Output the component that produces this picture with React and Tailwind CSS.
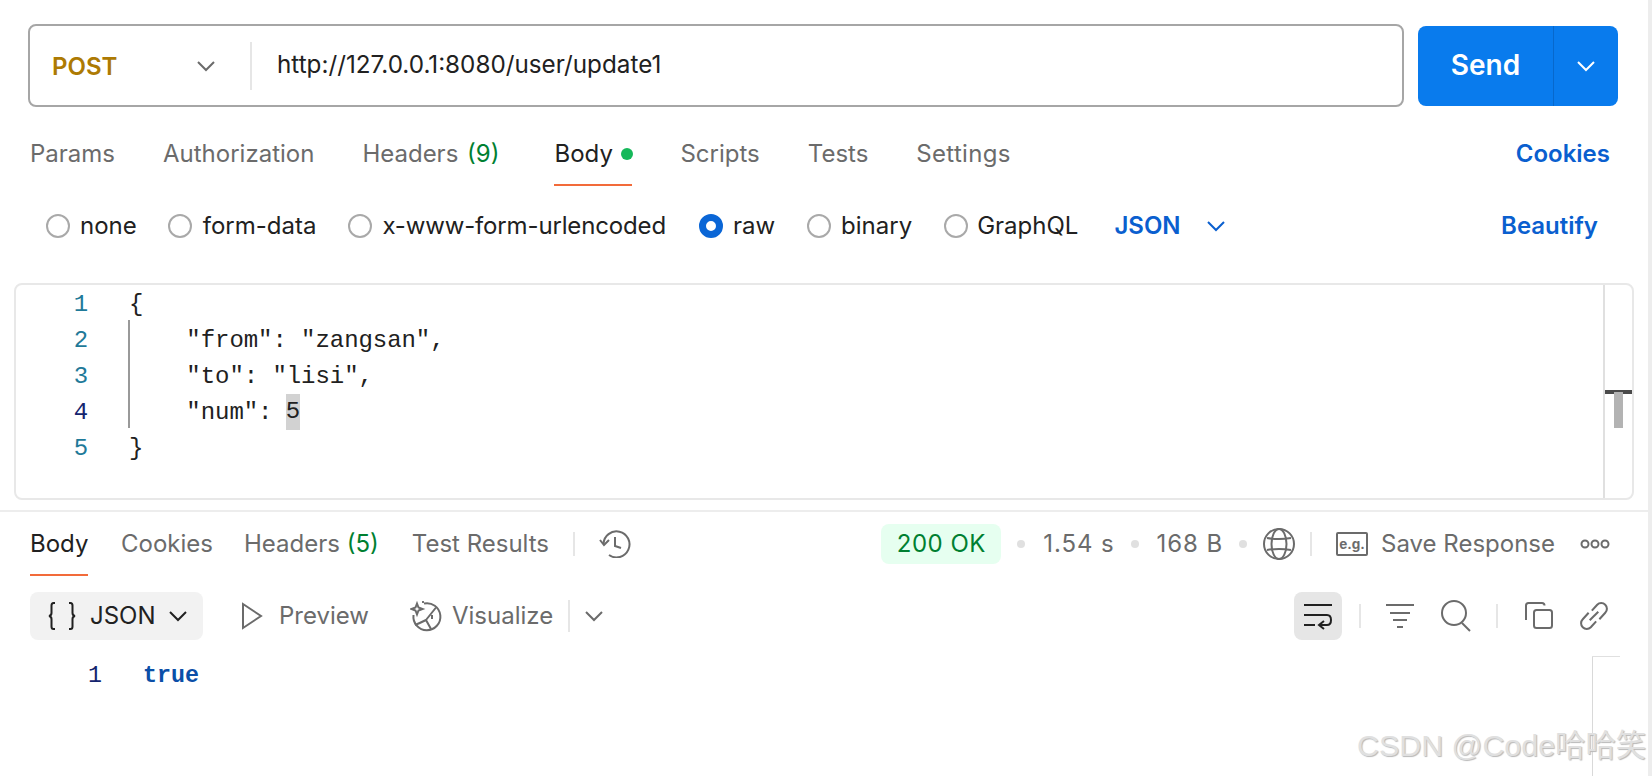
import React from "react";

const Chevron = ({ className = "", w = 20, h = 12, color = "#6b6b6b", sw = 2 }) => (
  <svg width={w} height={h} viewBox="0 0 20 12" className={className} fill="none">
    <path d="M2 2 L10 10 L18 2" stroke={color} strokeWidth={sw} />
  </svg>
);

const Radio = ({ on }) =>
  on ? (
    <span className="w-6 h-6 rounded-full border-[7px] border-[#0a66d6] bg-white shrink-0" />
  ) : (
    <span className="w-6 h-6 rounded-full border-2 border-[#a9a9a9] bg-white shrink-0" />
  );

const Sep = ({ className = "", h = "h-6" }) => <span className={`w-[2px] bg-[#e6e6e6] shrink-0 ${h} ${className}`} />;
const Dot = ({ className = "" }) => <span className={`w-2 h-2 rounded-full bg-[#e0e0e0] shrink-0 ${className}`} />;

const code = [
  ["1", "#1f7a99", "{"],
  ["2", "#1f7a99", '    "from": "zangsan",'],
  ["3", "#1f7a99", '    "to": "lisi",'],
  ["4", "#14246e", '    "num": '],
  ["5", "#1f7a99", "}"],
];

export default function App() {
  return (
    <div className="relative w-[1652px] h-[776px] overflow-hidden bg-white [font-family:Inter,sans-serif] text-[24px] text-[#6b6b6b]">
      {/* request bar */}
      <div className="flex items-center pt-6 pl-7">
        <div className="flex items-center w-[1376px] h-[83px] border-2 border-[#a6a6a6] rounded-lg">
          <span className="ml-[22px] mt-[2px] w-[144px] font-semibold text-[#ad7a03]">POST</span>
          <Chevron />
          <Sep className="ml-[34px]" h="h-12" />
          <span className="ml-[25px] text-[24.25px] text-[#212121]">http://127.0.0.1:8080/user/update1</span>
        </div>
        <div className="ml-[14px] flex items-center w-[200px] h-[80px] rounded-lg bg-[#097bed] text-white">
          <span className="w-[135px] mb-[2px] text-center font-semibold text-[28px]">Send</span>
          <span className="w-[1px] h-full bg-[#0768cc]" />
          <span className="flex-1 flex justify-center">
            <Chevron color="#ffffff" />
          </span>
        </div>
      </div>

      {/* request tabs */}
      <div className="flex items-start h-[79px] pl-[30px] pr-[42px]">
        <span className="mt-[29px]">Params</span>
        <span className="mt-[29px] ml-[48px]">Authorization</span>
        <span className="mt-[29px] ml-[48px]">
          Headers <span className="ml-[2px] text-[#007f31]">(9)</span>
        </span>
        <div className="ml-[55px] h-[79px] flex flex-col w-[78px]">
          <div className="mt-[29px] flex items-center text-[#212121]">
            Body<span className="ml-[8px] w-3 h-3 rounded-full bg-[#15b85a] shrink-0" />
          </div>
          <span className="mt-auto h-[2px] bg-[#f26b3a]" />
        </div>
        <span className="mt-[29px] ml-[48px]">Scripts</span>
        <span className="mt-[29px] ml-[48px]">Tests</span>
        <span className="mt-[29px] ml-[48px] tracking-[0.3px]">Settings</span>
        <span className="mt-[29px] ml-auto font-semibold text-[#0a5fcf]">Cookies</span>
      </div>

      {/* body types */}
      <div className="flex items-center h-[80px] pl-[46px] pr-[54px] text-[#212121]">
        <Radio /><span className="ml-[10px]">none</span>
        <span className="ml-[31px]" /><Radio /><span className="ml-[11px]">form-data</span>
        <span className="ml-[32px]" /><Radio /><span className="ml-[10px] tracking-[-0.15px]">x-www-form-urlencoded</span>
        <span className="ml-[33px]" /><Radio on /><span className="ml-[10px]">raw</span>
        <span className="ml-[32px]" /><Radio /><span className="ml-[10px]">binary</span>
        <span className="ml-[32px]" /><Radio /><span className="ml-[9px]">GraphQL</span>
        <span className="ml-[36px] font-semibold text-[#0a5fcf]">JSON</span>
        <Chevron className="ml-[25px]" color="#0a5fcf" />
        <span className="ml-auto font-semibold text-[#0a5fcf]">Beautify</span>
      </div>

      {/* editor */}
      <div className="ml-[14px] mt-[17px] w-[1620px] h-[217px] flex border-2 border-[#e8e8e8] rounded-lg">
        <div className="relative flex-1 pt-[1.5px] [font-family:'Liberation_Mono',monospace] text-[24px] tracking-[-0.06px] leading-[36px]">
          <span className="absolute left-[112px] top-[35px] w-[2px] h-[108px] bg-[#999999]" />
          {code.map(([n, c, t]) => (
            <div key={n} className="flex h-[36px] whitespace-pre text-[#212121]">
              <span className="w-[72px] text-right shrink-0" style={{ color: c }}>{n}</span>
              <span className="ml-[41px]">
                {t}
                {n === "4" && <span className="relative -top-[1px] -ml-[1px] inline-block h-[36px] bg-[#d2d2d2]">5</span>}
              </span>
            </div>
          ))}
        </div>
        <div className="relative w-[29px] border-l-2 border-[#e0e0e0]">
          <span className="absolute left-0 right-0 top-[105px] h-1 bg-[#4a4a4a]" />
          <span className="absolute left-[9px] w-[9px] top-[107px] h-9 bg-[#b3b3b3]" />
        </div>
      </div>

      <div className="mt-[10px] h-[2px] w-[1648px] bg-[#ededed]" />

      {/* response tabs */}
      <div className="flex items-start h-[64px] pl-[30px] pr-[42px]">
        <div className="h-[64px] w-[58px] flex flex-col text-[#212121]">
          <span className="mt-[14px]">Body</span>
          <span className="mt-auto h-[2px] bg-[#f26b3a]" />
        </div>
        <span className="mt-[14px] ml-[33px]">Cookies</span>
        <span className="mt-[14px] ml-[31px]">
          Headers <span className="text-[#007f31]">(5)</span>
        </span>
        <span className="mt-[14px] ml-[33px]">Test Results</span>
        <Sep className="mt-[20px] ml-[24px]" />
        <svg className="mt-[18px] ml-[24px]" width="32" height="28" viewBox="0 0 32 28" fill="none" stroke="#6b6b6b" strokeWidth="2">
          <path d="M4.5 14 A13 13 0 1 1 10 25" />
          <path d="M1 10 L5 15 L10 10" />
          <path d="M16 7 V16 L22 18" />
        </svg>
        <div className="ml-auto flex items-center h-[38px] mt-[13px]">
          <span className="flex items-center justify-center w-[120px] h-[40px] rounded-lg bg-[#e6fff0] text-[#007f31] tracking-[0.5px]">200 OK</span>
          <Dot className="ml-4" />
          <span className="ml-[18px] tracking-[0.9px]">1.54 s</span>
          <Dot className="ml-4" />
          <span className="ml-[18px] tracking-[0.9px]">168 B</span>
          <Dot className="ml-4" />
          <svg className="ml-[16px]" width="32" height="32" viewBox="0 0 32 32" fill="none" stroke="#6b6b6b" strokeWidth="2">
            <circle cx="16" cy="16" r="15" />
            <ellipse cx="16" cy="16" rx="7.5" ry="15" />
            <path d="M4 10 Q16 12 28 10 M4 22 Q16 20 28 22" />
          </svg>
          <Sep className="ml-[15px]" />
          <svg className="ml-[24px]" width="32" height="24" viewBox="0 0 32 24" fill="none">
            <rect x="1" y="1" width="30" height="22" stroke="#6b6b6b" strokeWidth="2" rx="1" />
            <text x="16" y="16.5" textAnchor="middle" fontSize="13.5" fontFamily="Inter" fill="#6b6b6b" fontWeight="700">e.g.</text>
          </svg>
          <span className="ml-[13px]">Save Response</span>
          <svg className="ml-[25px]" width="30" height="12" viewBox="0 0 30 12" fill="none" stroke="#6b6b6b" strokeWidth="2">
            <circle cx="5" cy="6" r="3.5" />
            <circle cx="15" cy="6" r="3.5" />
            <circle cx="25" cy="6" r="3.5" />
          </svg>
        </div>
      </div>

      {/* response toolbar */}
      <div className="flex items-center h-[48px] mt-[16px] pl-[30px] pr-[43px]">
        <div className="flex items-center w-[173px] h-[48px] rounded-lg bg-[#f2f2f2] text-[#212121]">
          <svg className="ml-[18px]" width="28" height="28" viewBox="0 0 28 28" fill="none" stroke="#212121" strokeWidth="2">
            <path d="M7 1 H5.5 Q3.5 1 3.5 3.5 V11 Q3.5 13.5 1 14 Q3.5 14.5 3.5 17 V24.5 Q3.5 27 5.5 27 H7" />
            <path d="M21 1 H22.5 Q24.5 1 24.5 3.5 V11 Q24.5 13.5 27 14 Q24.5 14.5 24.5 17 V24.5 Q24.5 27 22.5 27 H21" />
          </svg>
          <span className="ml-[14px]">JSON</span>
          <Chevron className="ml-[12px]" color="#212121" />
        </div>
        <svg className="ml-[38px]" width="22" height="28" viewBox="0 0 22 28" fill="none" stroke="#6b6b6b" strokeWidth="2">
          <path d="M2 2 L20 14 L2 26 Z" />
        </svg>
        <span className="ml-[16px]">Preview</span>
        <svg className="ml-[41px]" width="32" height="32" viewBox="0 0 32 32" fill="none" stroke="#6b6b6b" strokeWidth="2">
          <path d="M14 3.5 A13.5 13.5 0 1 1 3.5 15" />
          <path d="M7 3.5 L8.5 7.5 L12.5 9 L8.5 10.5 L7 14.5 L5.5 10.5 L1.5 9 L5.5 7.5 Z" />
          <path d="M13 1 V3 M12 2 H14" strokeWidth="1.5" />
          <path d="M26 7.5 L16 20 L21 29 M5 25 Q10 23 16 20" />
          <path d="M22 15 V19" />
        </svg>
        <span className="ml-[10px]">Visualize</span>
        <Sep className="ml-[15px]" h="h-8" />
        <Chevron className="ml-[14px]" />
        <div className="ml-auto flex items-center">
          <div className="flex items-center justify-center w-[48px] h-[48px] rounded-lg bg-[#e6e6e6]">
            <svg width="30" height="28" viewBox="0 0 30 28" fill="none" stroke="#212121" strokeWidth="2">
              <path d="M1 3 H29 M1 13 H24 Q28 13 28 18 Q28 23 24 23 H16 M21 19 L16 23 L21 27 M1 23 H12" />
            </svg>
          </div>
          <Sep className="ml-[17px]" />
          <svg className="ml-[24px]" width="30" height="26" viewBox="0 0 30 26" fill="none" stroke="#6b6b6b" strokeWidth="2">
            <path d="M1 2 H29 M5 10 H25 M8 17 H22 M12 24 H18" />
          </svg>
          <svg className="ml-[26px]" width="30" height="32" viewBox="0 0 30 32" fill="none" stroke="#6b6b6b" strokeWidth="2">
            <circle cx="13" cy="13" r="12" />
            <path d="M21 23 L29 31" />
          </svg>
          <Sep className="ml-[25px]" />
          <svg className="ml-[27px]" width="28" height="28" viewBox="0 0 28 28" fill="none" stroke="#6b6b6b" strokeWidth="2">
            <rect x="9" y="8" width="18" height="18" rx="2.5" />
            <path d="M1 18 V3.5 Q1 1 3.5 1 H17 Q19.5 1 19.5 3.5" />
          </svg>
          <svg className="ml-[26px]" width="30" height="30" viewBox="0 0 28 28" fill="none" stroke="#6b6b6b" strokeWidth="1.9">
            <path d="M12 9 L17 3.5 A5.2 5.2 0 0 1 24.5 11 L19 17" />
            <path d="M16 19 L11 24.5 A5.2 5.2 0 0 1 3.5 17 L9 11" />
            <path d="M10 18 L18 10" />
          </svg>
        </div>
      </div>

      {/* response body */}
      <div className="flex mt-[18px] h-[36px] items-center [font-family:'Liberation_Mono',monospace] text-[23.3px]">
        <span className="w-[102px] text-right text-[#14246e]">1</span>
        <span className="ml-[41px] font-bold text-[#0b4fa8]">true</span>
      </div>

      {/* overlays */}
      <span className="absolute right-0 top-0 w-1 h-full bg-[#ededed]" />
      <span className="absolute left-[1592px] top-[656px] w-[1px] h-[120px] bg-[#d9d9d9]" />
      <span className="absolute left-[1592px] top-[656px] w-[28px] h-[1px] bg-[#e0e0e0]" />
      <span className="absolute left-[1357px] top-[726px] text-[30.4px] leading-[38px] text-[#e0e0e0] whitespace-nowrap [font-family:'Liberation_Sans','Noto_Sans_CJK_SC',sans-serif] [text-shadow:1px_1px_1px_#b8b8b8]">
        CSDN @Code哈哈笑
      </span>
    </div>
  );
}
